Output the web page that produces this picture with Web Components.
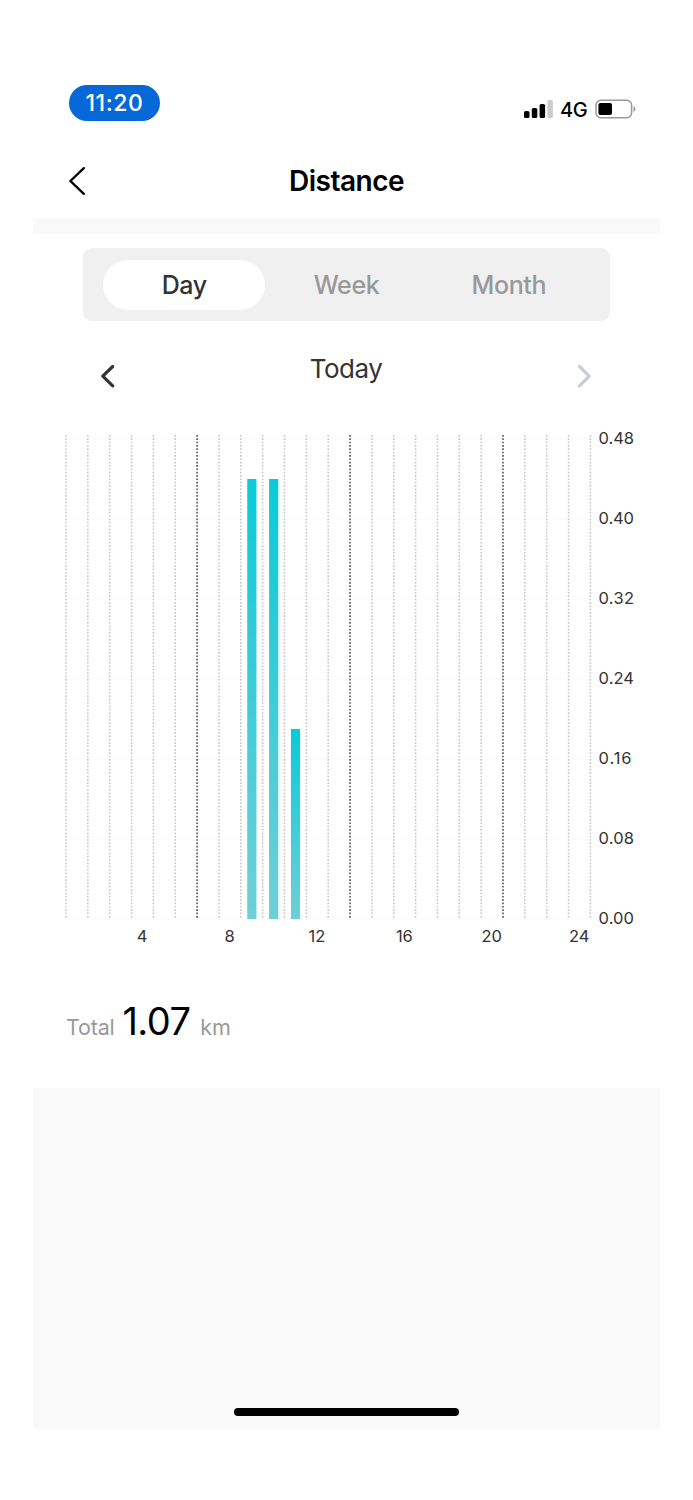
<!DOCTYPE html>
<html lang="en">
<head>
<meta charset="utf-8">
<title>Distance</title>
<style>
    body {
        margin: 0;
        background: #fff;
        font-family: Inter, "Liberation Sans", sans-serif;
    }
</style>
</head>
<body>
<distance-screen>
    <status-bar time="11:20" network="4G"></status-bar>
    <nav-header>Distance</nav-header>
    <range-tabs>
        <range-tab selected>Day</range-tab>
        <range-tab>Week</range-tab>
        <range-tab>Month</range-tab>
    </range-tabs>
    <date-stepper>Today</date-stepper>
    <hour-chart></hour-chart>
    <total-line label="Total" value="1.07" unit="km"></total-line>
    <home-area></home-area>
</distance-screen>

<script>
customElements.define('distance-screen', class extends HTMLElement {
    constructor() {
        super();
        this.attachShadow({mode: 'open'}).innerHTML = `
            <style>
                :host {
                    display: flex;
                    flex-direction: column;
                    box-sizing: border-box;
                    width: 693px;
                    height: 1500px;
                    padding: 70px 33px 71px;
                    overflow: hidden;
                }
            </style>
            <slot></slot>
        `;
    }
});

customElements.define('status-bar', class extends HTMLElement {
    constructor() {
        super();
        this.attachShadow({mode: 'open'}).innerHTML = `
            <style>
                :host {
                    display: flex;
                    justify-content: space-between;
                    height: 74px;
                    padding: 0 24px 0 36px;
                }
                .time {
                    width: 91px;
                    height: 35.5px;
                    margin-top: 15px;
                    border-radius: 18px;
                    background: #0568d6;
                    color: #fff;
                    font-size: 23px;
                    font-weight: 450;
                    line-height: 37px;
                    letter-spacing: 0.6px;
                    text-align: center;
                }
                .right {
                    display: flex;
                    align-items: center;
                    height: 22px;
                    margin-top: 28px;
                }
                .network {
                    width: 28px;
                    margin: 2px 7px 0 7px;
                    font-size: 20px;
                    font-weight: 500;
                    line-height: 22px;
                    letter-spacing: -0.4px;
                }
            </style>
            <div class="time">${this.getAttribute('time')}</div>
            <div class="right">
                <svg width="29" height="22" viewBox="0 0 29 22">
                    <rect x="0" y="13" width="5.5" height="7" rx="1.6"/>
                    <rect x="7.8" y="10" width="5.5" height="10" rx="1.6"/>
                    <rect x="15.6" y="6" width="5.5" height="14" rx="1.6"/>
                    <rect x="23.4" y="2" width="5.5" height="18" rx="1.6" fill="#ccc"/>
                </svg>
                <div class="network">${this.getAttribute('network')}</div>
                <svg width="41" height="22" viewBox="0 0 41 22">
                    <rect x="1" y="2.3" width="35.6" height="17.4" rx="5" fill="none" stroke="#999" stroke-width="1.5"/>
                    <rect x="3.4" y="5" width="13.6" height="12" rx="2"/>
                    <path d="M38.4 8.2c2.6 1 2.6 4.6 0 5.6z" fill="#999"/>
                </svg>
            </div>
        `;
    }
});

customElements.define('nav-header', class extends HTMLElement {
    constructor() {
        super();
        this.attachShadow({mode: 'open'}).innerHTML = `
            <style>
                :host {
                    display: grid;
                    grid-template-columns: 60px 1fr 60px;
                    align-items: center;
                    height: 74px;
                    border-bottom: 16px solid #f9f9f9;
                }
                svg {
                    margin-left: 34px;
                }
                h1 {
                    margin: 0;
                    font-size: 28px;
                    font-weight: 600;
                    line-height: 34px;
                    letter-spacing: -0.5px;
                    text-align: center;
                }
            </style>
            <svg width="20" height="30" viewBox="0 0 20 30">
                <path d="M16.8 2.2L3.4 15l13.4 12.8" fill="none" stroke="#000" stroke-width="2.4" stroke-linecap="round" stroke-linejoin="round"/>
            </svg>
            <h1><slot></slot></h1>
        `;
    }
});

customElements.define('range-tabs', class extends HTMLElement {
    constructor() {
        super();
        this.attachShadow({mode: 'open'}).innerHTML = `
            <style>
                :host {
                    display: flex;
                    box-sizing: border-box;
                    width: 527px;
                    height: 73px;
                    margin: 14px 0 0 50px;
                    padding: 12px 20px 11px;
                    border-radius: 9px;
                    background: #f0f0f0;
                }
            </style>
            <slot></slot>
        `;
    }
});

customElements.define('range-tab', class extends HTMLElement {
    constructor() {
        super();
        this.attachShadow({mode: 'open'}).innerHTML = `
            <style>
                :host {
                    flex: 1;
                    border-radius: 25px;
                    color: #999;
                    font-size: 25px;
                    font-weight: 500;
                    line-height: 50px;
                    letter-spacing: -0.4px;
                    text-align: center;
                }
                :host([selected]) {
                    background: #fff;
                    color: #333;
                }
            </style>
            <slot></slot>
        `;
    }
});

customElements.define('date-stepper', class extends HTMLElement {
    constructor() {
        super();
        this.attachShadow({mode: 'open'}).innerHTML = `
            <style>
                :host {
                    display: flex;
                    justify-content: space-between;
                    height: 84px;
                    margin-top: 30px;
                    padding: 0 67px 0 66px;
                }
                svg {
                    margin-top: 11px;
                }
                .date {
                    color: #333;
                    font-size: 26px;
                    line-height: 36px;
                    letter-spacing: -0.5px;
                }
            </style>
            <svg width="18" height="28" viewBox="0 0 18 28">
                <path d="M13.7 4.5L3.8 14.2l9.9 9.6" fill="none" stroke="#333" stroke-width="3.2" stroke-linecap="round" stroke-linejoin="round"/>
            </svg>
            <div class="date"><slot></slot></div>
            <svg width="18" height="28" viewBox="0 0 18 28">
                <path d="M4.5 4.5L14.2 14.2l-9.7 9.6" fill="none" stroke="#c8ccd6" stroke-width="3.2" stroke-linecap="round" stroke-linejoin="round"/>
            </svg>
        `;
    }
});

customElements.define('hour-chart', class extends HTMLElement {
    constructor() {
        super();
        const step = 21.85;
        const left = 33;
        const bottom = 484;
        let out = '';

        // value rows
        for (let i = 0; i <= 6; i++) {
            const y = bottom - i * 80;
            out += `<line x1="${left}" x2="558" y1="${y}" y2="${y}" stroke="#fafafa"/>`;
            out += `<text x="565.6" y="${y + 5}" textLength="${i === 2 ? 33 : 35.4}">${(i * 0.08).toFixed(2)}</text>`;
        }

        // hour columns, every seventh one is dark
        for (let i = 0; i <= 24; i++) {
            const x = left + i * step;
            const dark = i === 6 || i === 13 || i === 20;
            out += `<line x1="${x}" x2="${x}" y1="0" y2="${bottom}" stroke="${dark ? '#666' : '#c6c6c6'}" stroke-width="${dark ? 1.8 : 1.5}" stroke-dasharray="1.67 1.67"/>`;
        }

        // bars: [hour, km]
        [[9, 0.44], [10, 0.44], [11, 0.19]].forEach(([hour, km]) => {
            const h = km * 1000;
            out += `<rect x="${left + (hour - 0.5) * step - 4.5}" y="${bottom - h}" width="9.2" height="${h}" fill="url(#bar)"/>`;
        });

        for (let hour = 4; hour <= 24; hour += 4) {
            out += `<text x="${left + (hour - 0.5) * step - 0.3}" y="507" text-anchor="middle">${hour}</text>`;
        }

        this.attachShadow({mode: 'open'}).innerHTML = `
            <style>
                :host {
                    display: block;
                    height: 520px;
                }
                svg {
                    display: block;
                    overflow: visible;
                }
                text {
                    fill: #333;
                    font-size: 16.5px;
                }
            </style>
            <svg width="627" height="520" viewBox="0 0 627 520">
                <defs>
                    <linearGradient id="bar" x1="0" x2="0" y1="0" y2="1">
                        <stop offset="0" stop-color="#0bcad8"/>
                        <stop offset="1" stop-color="#70cfd6"/>
                    </linearGradient>
                </defs>
                ${out}
            </svg>
        `;
    }
});

customElements.define('total-line', class extends HTMLElement {
    constructor() {
        super();
        this.attachShadow({mode: 'open'}).innerHTML = `
            <style>
                :host {
                    display: flex;
                    align-items: baseline;
                    height: 90px;
                    margin-top: 43px;
                    padding-left: 33px;
                    color: #999;
                    font-size: 21.5px;
                    line-height: 46px;
                    letter-spacing: -0.2px;
                }
                .value {
                    margin: 0 10px 0 8px;
                    color: #000;
                    font-size: 38px;
                    letter-spacing: -0.6px;
                }
            </style>
            <span>${this.getAttribute('label')}</span>
            <span class="value">${this.getAttribute('value')}</span>
            <span>${this.getAttribute('unit')}</span>
        `;
    }
});

customElements.define('home-area', class extends HTMLElement {
    constructor() {
        super();
        this.attachShadow({mode: 'open'}).innerHTML = `
            <style>
                :host {
                    display: flex;
                    flex: 1;
                    align-items: flex-end;
                    justify-content: center;
                    background: #f9f9f9;
                }
                div {
                    width: 225px;
                    height: 8.5px;
                    margin-bottom: 13px;
                    border-radius: 5px;
                    background: #000;
                }
            </style>
            <div></div>
        `;
    }
});
</script>
</body>
</html>
